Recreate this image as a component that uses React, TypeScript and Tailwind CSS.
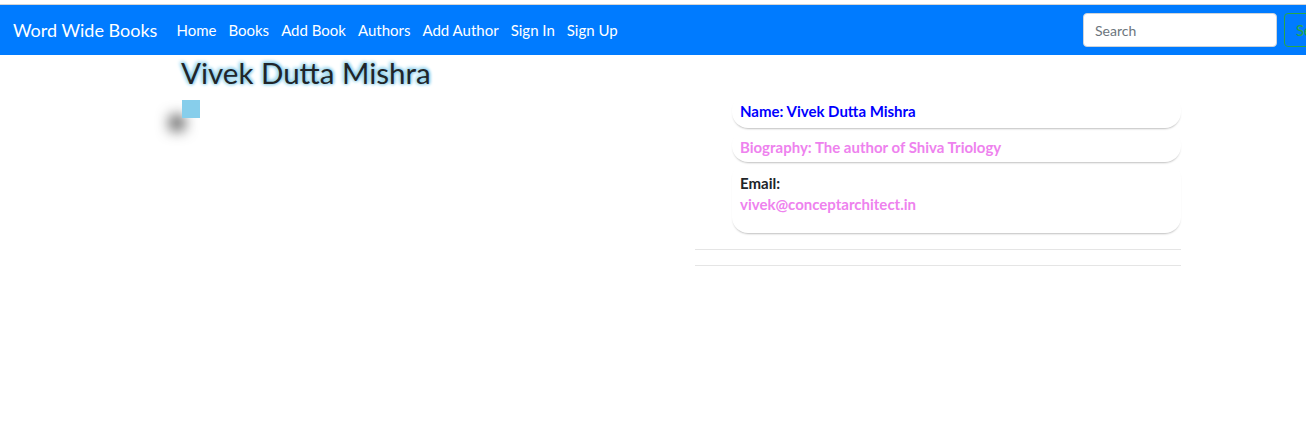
const NAV_LINKS = ["Home", "Books", "Add Book", "Authors", "Add Author", "Sign In", "Sign Up"];

const author = {
	name: "Vivek Dutta Mishra",
	biography: "The author of Shiva Triology",
	email: "vivek@conceptarchitect.in",
};

const NavBar = () => (
	<nav className="flex h-[50px] items-center justify-between overflow-hidden bg-[#007bff] pl-[13px] text-white">
		<div className="flex items-center">
			<a className="mr-[13px] text-[18px] leading-none">Word Wide Books</a>
			<ul className="flex items-center text-[15px]">
				{NAV_LINKS.map((link) => (
					<li key={link} className="px-[6px]">
						{link}
					</li>
				))}
			</ul>
		</div>
		<form className="mr-[-60px] flex shrink-0 items-center gap-[7px]">
			<input
				type="text"
				placeholder="Search"
				className="h-[34px] w-[194px] rounded-[4px] border border-[#ced4da] bg-white px-[11px] text-[14px] text-[#495057] placeholder:text-[#6c757d]"
			/>
			<button
				type="button"
				className="h-[34px] w-[82px] rounded-[4px] border border-[#28a745] px-[11px] text-left text-[15px] text-[#28a745]"
			>
				Search
			</button>
		</form>
	</nav>
);

const AuthorDetails = () => (
	<div className="w-[486px]">
		<ul className="mt-[3px] pl-[37px] text-[15px] font-bold">
			<li className="rounded-[16px] px-[8px] pt-[7px] pb-[7px] leading-[20px] text-[#0000ff] shadow-[0_2px_2px_-1px_rgba(0,0,0,0.25)]">
				Name: {author.name}
			</li>
			<li className="mt-[1px] rounded-[16px] px-[8px] pt-[8px] pb-[5px] leading-[20px] text-[#ee82ee] shadow-[0_2px_2px_-1px_rgba(0,0,0,0.25)]">
				Biography: {author.biography}
			</li>
			<li className="rounded-[16px] px-[8px] pt-[11px] pb-[18px] leading-[21px] shadow-[0_2px_2px_-1px_rgba(0,0,0,0.25)]">
				<p className="text-[#212529]">Email:</p>
				<p className="text-[#ee82ee]">{author.email}</p>
			</li>
		</ul>
		<hr className="mt-[16px] border-[#e5e5e5]" />
		<hr className="mt-[15px] border-[#e5e5e5]" />
	</div>
);

export default function App() {
	return (
		<div className="min-h-[440px] bg-white font-['Lato',sans-serif] text-[#212529]">
			<div className="h-[5px] border-b border-[#d4d4d4] bg-white" />
			<NavBar />
			<main className="px-[181px] pr-[125px]">
				<h2 className="text-[29.5px] leading-[36px] [text-shadow:-1px_-1px_4px_#87ceeb,0_0_4px_#87ceeb,1px_0_3px_#87ceeb]">
					{author.name}
				</h2>
				<div className="flex">
					<div className="flex-1 pt-[9px]">
						{/* broken author photo */}
						<div className="ml-[1px] h-[18px] w-[18px] bg-[skyblue] shadow-[-14px_14px_14px_-2px_rgba(0,0,0,0.75)]" />
					</div>
					<AuthorDetails />
				</div>
			</main>
		</div>
	);
}
